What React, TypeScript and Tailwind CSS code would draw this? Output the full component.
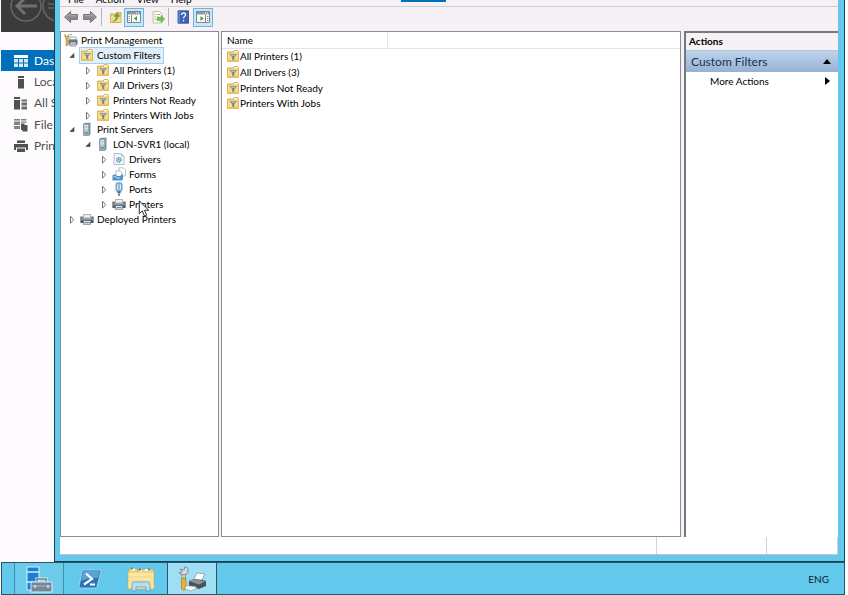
import React from 'react';

type IconName = 'filter' | 'server' | 'drivers' | 'forms' | 'ports' | 'printer';

interface TreeNode {
  label: string;
  level: 1 | 2 | 3;
  icon: IconName;
  open?: boolean;
  selected?: boolean;
}

const treeNodes: TreeNode[] = [
  { label: 'Custom Filters', level: 1, icon: 'filter', open: true, selected: true },
  { label: 'All Printers (1)', level: 2, icon: 'filter' },
  { label: 'All Drivers (3)', level: 2, icon: 'filter' },
  { label: 'Printers Not Ready', level: 2, icon: 'filter' },
  { label: 'Printers With Jobs', level: 2, icon: 'filter' },
  { label: 'Print Servers', level: 1, icon: 'server', open: true },
  { label: 'LON-SVR1 (local)', level: 2, icon: 'server', open: true },
  { label: 'Drivers', level: 3, icon: 'drivers' },
  { label: 'Forms', level: 3, icon: 'forms' },
  { label: 'Ports', level: 3, icon: 'ports' },
  { label: 'Printers', level: 3, icon: 'printer' },
  { label: 'Deployed Printers', level: 1, icon: 'printer' },
];

const filters = ['All Printers (1)', 'All Drivers (3)', 'Printers Not Ready', 'Printers With Jobs'];

const indent = { 1: 'pl-[7px]', 2: 'pl-[23px]', 3: 'pl-[39px]' };

function Icon({ name }: { name: IconName }) {
  return (
    <svg viewBox="0 0 14 14" className="h-3.5 w-3.5 shrink-0" aria-hidden="true">
      {name === 'filter' && (
        <>
          <path d="M1.500 3H7l1-1.500h3.500l1 1v10h-11z" fill="#f0c662" stroke="#d5aa50" strokeWidth=".8" />
          <path d="M8 2h3.500v1.500H8z" fill="#fffbe6" />
          <path d="M2 4.200h10v8H2z" fill="#f8da84" />
          <path d="M2 11h10v1.200H2z" fill="#f3c55c" />
          <path d="M3.500 5h7.500L8.200 8.200v3.300l-2-1V8.200z" fill="#6f8795" />
          <path d="M4.500 5.500h5.500L8.500 7H6z" fill="#a3bfd0" />
        </>
      )}
      {name === 'server' && (
        <>
          <path d="M3.500 2L5 .8h5.500v11.500L9 13.500H3.500z" fill="#8096a0" />
          <path d="M3.500 2H9v11.500H3.500z" fill="#a5bac4" stroke="#75878f" strokeWidth=".6" />
          <path d="M4.500 3.500H8M4.500 5H8M4.500 6.500H8M4.500 8H8" stroke="#e8f0f4" strokeWidth=".8" />
          <path d="M4.500 10H8v2.200H4.500z" fill="#7da08d" />
        </>
      )}
      {name === 'drivers' && (
        <>
          <path d="M2 1.500h7.500L12 4v8.500H2z" fill="#f4f8fb" stroke="#9db1bf" strokeWidth=".8" />
          <path d="M9.500 1.500V4H12" fill="#dce7ee" stroke="#9db1bf" strokeWidth=".8" />
          <circle cx="6.800" cy="7.800" r="2.200" fill="#d9ebf6" stroke="#528bb0" strokeWidth="1.400" strokeDasharray="1.200 .5" />
          <circle cx="6.800" cy="7.800" r=".8" fill="#447fa8" />
        </>
      )}
      {name === 'forms' && (
        <>
          <path d="M7 .8h4.500l2 2V9H7z" fill="#fff" stroke="#9fa8b0" strokeWidth=".7" />
          <path d="M4 4h4.500L10 5.500V10H4z" fill="#fff" stroke="#9fa8b0" strokeWidth=".7" />
          <path d="M.5 8.500L2 7.500h2l.8 1.500h3.500l1-1.500H11V12l-1.200 1.500H.5z" fill="#4b91cd" />
          <path d="M1.500 9.800h2.500l.8 1.200h3.500" stroke="#d1e8fa" strokeWidth=".9" fill="none" />
        </>
      )}
      {name === 'ports' && (
        <>
          <rect x="4" y=".8" width="6" height="8.500" rx="1.500" fill="#8fbdda" stroke="#5488ad" strokeWidth=".8" />
          <path d="M5.500 2.500v5M8.500 2.500v5" stroke="#dff1fb" strokeWidth=".9" />
          <path d="M5 9.300h4l-.7 2.200H5.700z" fill="#456f92" />
          <path d="M7 11.500V14" stroke="#6f8596" strokeWidth="1.800" />
        </>
      )}
      {name === 'printer' && (
        <>
          <path d="M3.500 2.500h7V6h-7z" fill="#eef1f3" stroke="#8c9499" strokeWidth=".7" />
          <path d="M.3 4.500h2.500V6.500h8.400v-2h2.500V11H.3z" fill="#6c7278" />
          <path d="M.8 7.300h12.400" stroke="#a5adb2" strokeWidth=".7" />
          <path d="M1 9.800h12" stroke="#4a5056" strokeWidth="1.200" />
          <path d="M3.300 8.500h7.400v3.800H3.300z" fill="#dfe8ee" stroke="#444b50" strokeWidth=".6" />
          <path d="M4.500 10.500h5" stroke="#4f94c4" strokeWidth="1" />
        </>
      )}
    </svg>
  );
}

function Expander({ open }: { open?: boolean }) {
  return (
    <svg viewBox="0 0 12 12" className="h-3 w-3 shrink-0" aria-hidden="true">
      {open ? (
        <path d="M6 4.500v4H2z" fill="#505050" stroke="#303030" strokeWidth=".6" />
      ) : (
        <path d="M2.500 3.200L5.700 6.700 2.500 10.200z" fill="#fff" stroke="#666" strokeWidth=".9" />
      )}
    </svg>
  );
}

function PrintManagementIcon() {
  return (
    <svg viewBox="0 0 14 14" className="h-3.5 w-3.5 shrink-0" aria-hidden="true">
      <path d="M6 4h6v3H6z" fill="#fff" stroke="#888" strokeWidth=".7" />
      <path d="M4.500 6.500h9v5h-9z" fill="#70777e" />
      <path d="M6 9h6v4H6z" fill="#e7edf2" stroke="#555" strokeWidth=".6" />
      <path d="M7 11h4" stroke="#5b89ae" />
      <path d="M1 1.500l1 2h1.500l1-2 .8 2L4 5v7.500H2V5L.7 3.500z" fill="#e3c148" stroke="#8d7c40" strokeWidth=".6" />
      <path d="M6 1.500h2" stroke="#999" />
    </svg>
  );
}

function Arrow({ flip }: { flip?: boolean }) {
  return (
    <svg viewBox="0 0 14 14" className={flip ? 'h-3.5 w-3.5 -scale-x-100' : 'h-3.5 w-3.5'} aria-hidden="true">
      <path d="M.6 7l6-5.500v3h6.800v5H6.600v3z" fill="#8b8b8f" stroke="#6c6c70" strokeWidth=".9" />
      <path d="M2.500 6.800L5.700 4v1.700h6.800" fill="none" stroke="#b9b9bd" strokeWidth=".8" />
    </svg>
  );
}

function PaneIcon({ right }: { right?: boolean }) {
  return (
    <svg viewBox="0 0 14 14" className="h-3.5 w-3.5" aria-hidden="true">
      <path d="M.5 1.500h13v11H.5z" fill="#fff" stroke="#7c858c" />
      <path d="M1 2h12v2.500H1z" fill="#8f9ba4" />
      <path d="M9 3h1M11 3h1" stroke="#fff" />
      {right ? (
        <>
          <path d="M9.500 5v7" stroke="#7c858c" />
          <path d="M11 6.500h1.500M11 8.500h1.500M11 10.500h1.500" stroke="#8a949b" />
          <path d="M4.500 6v5l3.200-2.500z" fill="#35a02f" />
        </>
      ) : (
        <>
          <path d="M4.500 5v7" stroke="#7c858c" />
          <path d="M1.500 6.500H3M1.500 8.500H3M1.500 10.500H3" stroke="#8a949b" />
          <path d="M10 6v5L6.800 8.500z" fill="#35a02f" />
        </>
      )}
    </svg>
  );
}

function Toolbar() {
  const plain = 'flex h-4 w-4 items-center justify-center';
  const pressed = 'flex h-[19px] w-5 items-center justify-center border border-[#65b7e6] bg-[#cce6f5]';
  return (
    <div role="toolbar" aria-label="Standard" className="flex h-[25px] items-center border-t border-[#cfcbd0] bg-[#f5f1f5] pl-[3px] pb-1">
      <button aria-label="Back" className={plain}><Arrow /></button>
      <button aria-label="Forward" className={`${plain} ml-[3px]`}><Arrow flip /></button>
      <span className="ml-[3px] h-[18px] w-px bg-[#b9b5ba]" />
      <button aria-label="Up one level" className={`${plain} ml-1.5`}>
        <svg viewBox="0 0 14 14" className="h-3.5 w-3.5" aria-hidden="true">
          <path d="M1.500 4h5l1-1.500h4.500V12.500H1.500z" fill="#efcb6b" stroke="#c9a04c" strokeWidth=".8" />
          <path d="M2 6h9.500v6H2z" fill="#f6dc92" />
          <path d="M3.500 11c2.500 0 3.500-1.800 3.500-4.500H5L8.200 2.500 11 6.500H9c0 3.500-2.500 5.500-5.500 4.500z" fill="#5eab35" stroke="#7c9e3a" strokeWidth=".4" />
        </svg>
      </button>
      <button aria-label="Show or hide console tree" aria-pressed="true" className={pressed}><PaneIcon /></button>
      <button aria-label="Export list" className={`${plain} ml-1.5`}>
        <svg viewBox="0 0 14 14" className="h-3.5 w-3.5" aria-hidden="true">
          <path d="M2 1.500h6.500L11 4v9H2z" fill="#fffbe9" stroke="#bdb38f" strokeWidth=".8" />
          <path d="M3.500 4.500H5M3.500 7H5M3.500 9.500H5M6 4.500h3M6 7h2" stroke="#8e99a0" strokeWidth=".8" />
          <path d="M6 7.500h4V5.500l3.700 3.500L10 12.500v-2H6z" fill="#6fc454" stroke="#4b9c38" strokeWidth=".5" />
        </svg>
      </button>
      <span className="ml-0.5 h-[18px] w-px bg-[#b9b5ba]" />
      <button aria-label="Help" className={`${plain} ml-1.5`}>
        <svg viewBox="0 0 14 14" className="h-3.5 w-3.5" aria-hidden="true">
          <path d="M2 .8h10.500v12.400H2z" fill="#3c64bd" stroke="#27418d" strokeWidth=".8" />
          <path d="M3 1v12" stroke="#8ba7e2" strokeWidth=".8" />
          <path d="M5.500 5c0-3 4.500-2.600 4 0-.2 1.400-2 1.500-2 3.500" fill="none" stroke="#fff" strokeWidth="1.300" />
          <circle cx="7.500" cy="10.700" r=".8" fill="#fff" />
        </svg>
      </button>
      <button aria-label="Show or hide action pane" aria-pressed="true" className={`${pressed} ml-0.5`}><PaneIcon right /></button>
    </div>
  );
}

function Tree() {
  return (
    <nav aria-label="Console tree" className="relative w-[159px] shrink-0 border border-[#8c8c98] bg-white pt-px">
      <ul role="tree" className="grid h-[193px] grid-rows-13">
        <li role="treeitem" className="flex items-center gap-[3px] pl-[3px]">
          <PrintManagementIcon />
          Print Management
        </li>
        {treeNodes.map((node) => (
          <li
            key={node.label}
            role="treeitem"
            aria-expanded={!!node.open}
            aria-selected={!!node.selected}
            className={`flex items-center ${indent[node.level]}`}
          >
            <Expander open={node.open} />
            <span
              className={
                node.selected
                  ? 'flex h-full items-center gap-[3px] bg-[#e0effa] pr-0.5 outline outline-[#a5cdea]'
                  : 'flex items-center gap-[3px]'
              }
            >
              <Icon name={node.icon} />
              {node.label}
            </span>
          </li>
        ))}
      </ul>
      {/* mouse pointer */}
      <svg viewBox="0 0 12 19" className="absolute top-[168px] left-[77px] h-[18px] w-3" aria-hidden="true">
        <path d="M1 1v13.500l3.200-3 2.300 5.500 2.300-1-2.300-5.200H11z" fill="#fff" stroke="#222" strokeWidth="1" />
      </svg>
    </nav>
  );
}

function FilterList() {
  return (
    <main className="min-w-0 flex-1 border border-[#8c8c98] bg-white">
      <table className="h-[79px] w-full border-collapse text-left">
        <thead>
          <tr className="h-4">
            <th className="w-[165px] border-r border-b border-[#e4e4e8] p-0 pl-[5px] font-normal">Name</th>
            <th className="border-b border-[#e4e4e8] p-0" />
          </tr>
        </thead>
        <tbody>
          {filters.map((name) => (
            <tr key={name}>
              <td colSpan={2} className="p-0 pl-1">
                <span className="flex items-center">
                  <Icon name="filter" />
                  {name}
                </span>
              </td>
            </tr>
          ))}
        </tbody>
      </table>
    </main>
  );
}

function Actions() {
  return (
    <aside className="flex w-[154px] shrink-0 flex-col border-t-2 border-l-2 border-[#77777f] bg-white">
      <h2 className="h-[17px] bg-[#f5f1f5] pl-[3px] leading-[17px] font-bold">Actions</h2>
      <button className="flex h-[22px] items-center justify-between border-t border-[#b8c6d8] bg-gradient-to-b from-[#bdd3eb] to-[#96b2d3] pr-[7px] pl-[5px] text-xs text-[#1b3050]">
        Custom Filters
        <svg viewBox="0 0 8 5" className="h-[5px] w-2" aria-hidden="true"><path d="M0 5l4-5 4 5z" fill="#000" /></svg>
      </button>
      <button className="flex h-[18px] items-center justify-between pr-2 pl-6">
        More Actions
        <svg viewBox="0 0 5 8" className="h-2 w-[5px]" aria-hidden="true"><path d="M0 0l5 4-5 4z" fill="#000" /></svg>
      </button>
    </aside>
  );
}

function PrintManagement() {
  return (
    <section className="flex min-w-0 flex-1 flex-col border-x border-b border-[#1d4254] bg-[#62c9ec] pr-1.5 pb-1.5 pl-[5px]">
      <div className="flex h-1.5 items-end overflow-hidden bg-[#f5f1f5] pl-2">
        <div role="menubar" className="flex gap-3 leading-[14px]">
          <button role="menuitem">File</button>
          <button role="menuitem">Action</button>
          <button role="menuitem">View</button>
          <button role="menuitem">Help</button>
        </div>
      </div>
      <Toolbar />
      <div className="flex flex-1 bg-[#f5f1f5]">
        <Tree />
        <div className="ml-0.5 flex min-w-0 flex-1 gap-[3px]">
          <FilterList />
          <Actions />
        </div>
      </div>
      <footer className="flex h-[18px] justify-end border-b border-[#c4c0c6] bg-white">
        <span className="w-[110px] border-l border-[#d4d2d6]" />
        <span className="w-[72px] border-x border-[#d4d2d6]" />
      </footer>
    </section>
  );
}

// only the start of each label fits beside the console window
const navItems = [
  {
    label: 'Das',
    icon: (
      <>
        <path d="M0 1h14v3H0z" />
        <path d="M0 5h4v3.500H0zM5 5h4v3.500H5zM10 5h4v3.500h-4zM0 9.500h4V13H0zM5 9.500h4V13H5zM10 9.500h4V13h-4z" opacity=".85" />
      </>
    ),
  },
  { label: 'Loca', icon: <path d="M4 1h6v2H4zM4 4h6v9.500H4z" /> },
  {
    label: 'All S',
    icon: (
      <>
        <path d="M0 1h6v2H0zM0 4h6v9.500H0z" />
        <path d="M7.500 3.500h5.500v2H7.500zM7.500 6.500h5.500v3H7.500zM7.500 10.500h5.500v3H7.500z" opacity=".85" />
      </>
    ),
  },
  {
    label: 'File',
    icon: (
      <>
        <path d="M0 1h6v1.500H0zM0 3.500h6V7H0zM0 8h6v3H0zM7 1h5.500v1.500H7zM7 3.500h5.500v1.200H7z" opacity=".7" />
        <path d="M7 5.500h3.500V7H13.500v6.500H8.500V12H7z" />
      </>
    ),
  },
  { label: 'Prin', icon: <path d="M3 1.500h8V4H3zM0 5h14v6h-2V8.500H2V11H0zM3 9.500h8V13H3z" /> },
];

function ServerManager() {
  return (
    <aside className="w-[54px] shrink-0 overflow-hidden bg-[#fdfbfd] pl-px">
      <div className="h-8 overflow-hidden bg-[#3b3b3b]">
        <svg viewBox="0 0 53 32" className="h-8 w-[53px]" fill="none" stroke="#666" aria-hidden="true">
          <circle cx="25" cy="6" r="15" strokeWidth="1.500" />
          <path d="M36 6H17M24 -2l-8 8 8 8" stroke="#707070" strokeWidth="3" />
          <circle cx="57" cy="6" r="15" strokeWidth="1.500" />
          <path d="M47 4h6M47 8h6" stroke="#606060" strokeWidth="1.500" />
        </svg>
      </div>
      <nav aria-label="Server Manager" className="mt-[18px] grid h-[107px] grid-rows-5 text-xs">
        {navItems.map((item, i) => (
          <a
            key={item.label}
            href="#"
            className={`flex items-center gap-[6px] pl-[13px] whitespace-nowrap ${i === 0 ? 'bg-[#0070ba] text-white' : 'text-[#505050]'}`}
          >
            <svg viewBox="0 0 14 14" className="h-3.5 w-3.5 shrink-0" fill="currentColor" aria-hidden="true">{item.icon}</svg>
            {item.label}
          </a>
        ))}
      </nav>
    </aside>
  );
}

function Taskbar() {
  return (
    <footer className="mr-[3px] ml-px flex h-[33px] shrink-0 items-stretch border border-[#27566a] bg-[#62c9ec] pl-3">
      <button aria-label="Server Manager" className="flex w-[50px] items-center justify-center border-x border-[#3f8fab] bg-[#6ccbea]">
        <svg viewBox="0 0 28 28" className="h-7 w-7" aria-hidden="true">
          <path d="M2 2h12v5H2zM2 7h12v10H2zM2 17h6v8H2z" fill="#1b80d3" stroke="#e6f6ff" strokeWidth=".9" />
          <path d="M12 17v-3h9v3" fill="none" stroke="#e6f6ff" strokeWidth="3" />
          <path d="M12 17v-3h9v3" fill="none" stroke="#667b8b" strokeWidth="1.500" />
          <path d="M6 17h21v10H6z" fill="#718899" stroke="#e6f6ff" strokeWidth=".9" />
          <path d="M6.500 21h20" stroke="#a8bdca" />
          <path d="M10 20v3M23 20v3" stroke="#dce9ef" strokeWidth="1.500" />
        </svg>
      </button>
      <button aria-label="PowerShell" className="ml-0.5 flex w-12 items-center justify-center">
        <svg viewBox="0 0 24 20" className="h-5 w-6" aria-hidden="true">
          <path d="M5 1h17q1.500 0 1 1.500l-4 15q-.4 1.500-2 1.500H2q-1.500 0-1-1.500l3-15Q3.500 1 5 1z" fill="#2c75b2" stroke="#b8def1" strokeWidth=".8" />
          <path d="M5 2h17l-2 7Q12 8 3 12z" fill="#5ba3d5" />
          <path d="M8 4.500l6 5.500-8 5.500" fill="none" stroke="#fff" strokeWidth="2.200" />
          <path d="M12 15.500h5" stroke="#fff" strokeWidth="2" />
        </svg>
      </button>
      <button aria-label="File Explorer" className="ml-[3px] flex w-12 items-center justify-center">
        <svg viewBox="0 0 28 26" className="h-[26px] w-7" aria-hidden="true">
          <path d="M1 5l2-2h7l1 2h4l1-2h9l2 2v18H1z" fill="#eed27c" stroke="#c5a34c" strokeWidth=".7" />
          <path d="M4 3.500h4M12 4.500h3M18 4h5" stroke="#fff" strokeWidth="2" />
          <path d="M4 2.500h2" stroke="#39a752" strokeWidth="2" />
          <path d="M12 3.500h2" stroke="#db463e" strokeWidth="2" />
          <path d="M21 3.500h2" stroke="#3d84ce" strokeWidth="2" />
          <path d="M1.500 7h25v15.500h-25z" fill="#f9e7a6" />
          <path d="M2 11h24M2 15h24" stroke="#efd486" strokeWidth="1" />
          <path d="M5 25v-7q0-2 2-2h14q2 0 2 2v7h-4v-4H9v4z" fill="#b9def2" stroke="#5c9fc7" strokeWidth=".8" />
        </svg>
      </button>
      <button aria-label="Print Management" className="ml-0.5 flex w-[50px] items-center justify-center border-x border-[#27566a] bg-[#a0dff3]">
        <svg viewBox="0 0 28 28" className="h-7 w-7" aria-hidden="true">
          <path d="M2 4l4 1L7 1.500l3 2v4l-3 2.500H4L1 8l3-1z" fill="#d5d9dc" stroke="#6f777c" strokeWidth=".8" />
          <path d="M4 9.500h3.500V14H4z" fill="#c3c9cc" stroke="#757d82" strokeWidth=".6" />
          <path d="M3.500 13.500h4.500V24q-2.200 2.500-4.500 0z" fill="#e9b52f" stroke="#a17c24" strokeWidth=".7" />
          <path d="M16 14l3-6 8 1-4 7z" fill="#fff" stroke="#818a90" strokeWidth=".7" />
          <path d="M11 16l5-2 9 1 3 1v5l-7 3-10-3z" fill="#4b5359" />
          <path d="M11 16l5-2 11 2.500-6 3z" fill="#8b949a" />
          <path d="M8 20.500l9 1 2 1.500-6 3-6-2z" fill="#f4f7f8" stroke="#848d93" strokeWidth=".6" />
        </svg>
      </button>
      <span className="mr-[15px] ml-auto self-center text-[#10232c]">ENG</span>
    </footer>
  );
}

export default function App() {
  return (
    <div className="flex h-screen flex-col overflow-hidden bg-[#fdfdfd] font-['Lato','Liberation_Sans',sans-serif] text-[10px] leading-[14px] text-black">
      <div className="relative flex min-h-0 flex-1 pr-[3px]">
        <ServerManager />
        <PrintManagement />
        {/* remote session connection bar, docked to the top edge */}
        <div className="absolute top-0 left-[401px] h-0.5 w-[45px] bg-[#0070ba]" />
      </div>
      <Taskbar />
    </div>
  );
}
